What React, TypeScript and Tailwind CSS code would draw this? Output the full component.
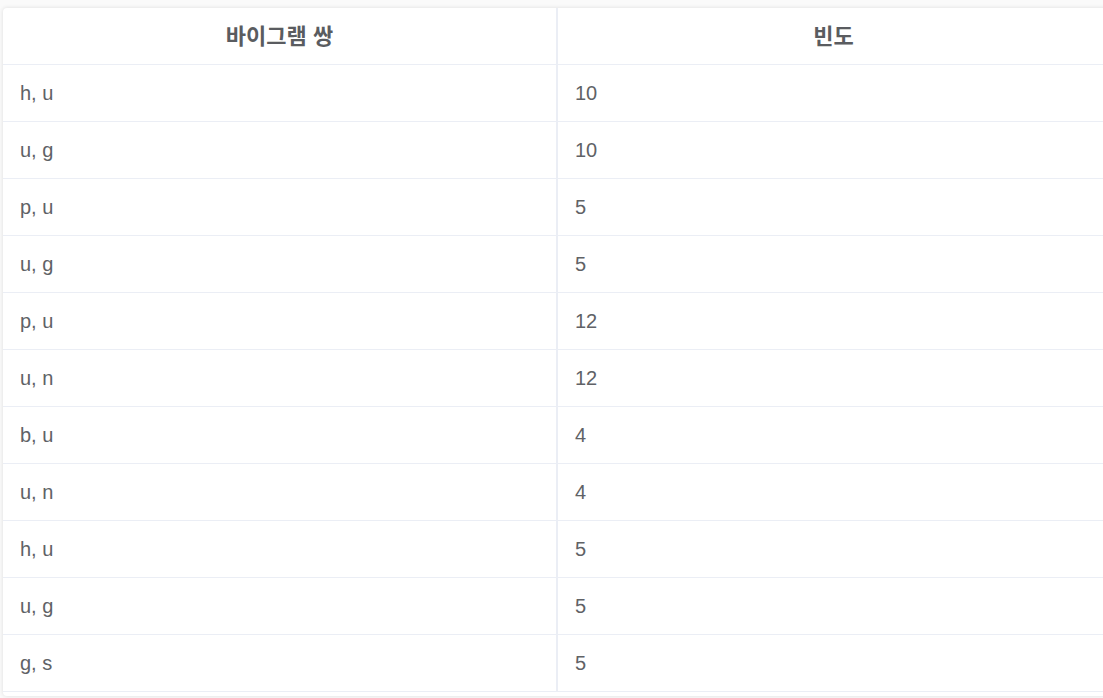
const rows: [string, string][] = [
  ["h, u", "10"],
  ["u, g", "10"],
  ["p, u", "5"],
  ["u, g", "5"],
  ["p, u", "12"],
  ["u, n", "12"],
  ["b, u", "4"],
  ["u, n", "4"],
  ["h, u", "5"],
  ["u, g", "5"],
  ["g, s", "5"],
];

export default function App() {
  return (
    <div
      className="w-[1103px] h-[698px] overflow-hidden bg-[#fafafa] pt-[8px] pl-[3px]"
      style={{ fontFamily: "'Liberation Sans', 'Noto Sans CJK KR', sans-serif" }}
    >
      <div className="w-[1106px] bg-white rounded-[4px] shadow-[0_0_4px_rgba(0,0,0,0.12)] pb-[4px]">
        <div className="grid grid-cols-[553px_553px] h-[57px] border-b border-[#ebeef5]">
          <div className="flex items-center justify-center text-[22px] font-semibold text-[#5a5c60]">
            바이그램 쌍
          </div>
          <div className="flex items-center justify-center border-l-2 border-[#ebeef5] text-[22px] font-semibold text-[#5a5c60]">
            빈도
          </div>
        </div>
        {rows.map(([pair, freq], i) => (
          <div
            key={i}
            className="grid grid-cols-[553px_553px] h-[57px] border-b border-[#ebeef5] text-[20px] text-[#606266]"
          >
            <div className="flex items-center pl-[17px]">{pair}</div>
            <div className="flex items-center pl-[17px] border-l-2 border-[#ebeef5]">{freq}</div>
          </div>
        ))}
      </div>
    </div>
  );
}
